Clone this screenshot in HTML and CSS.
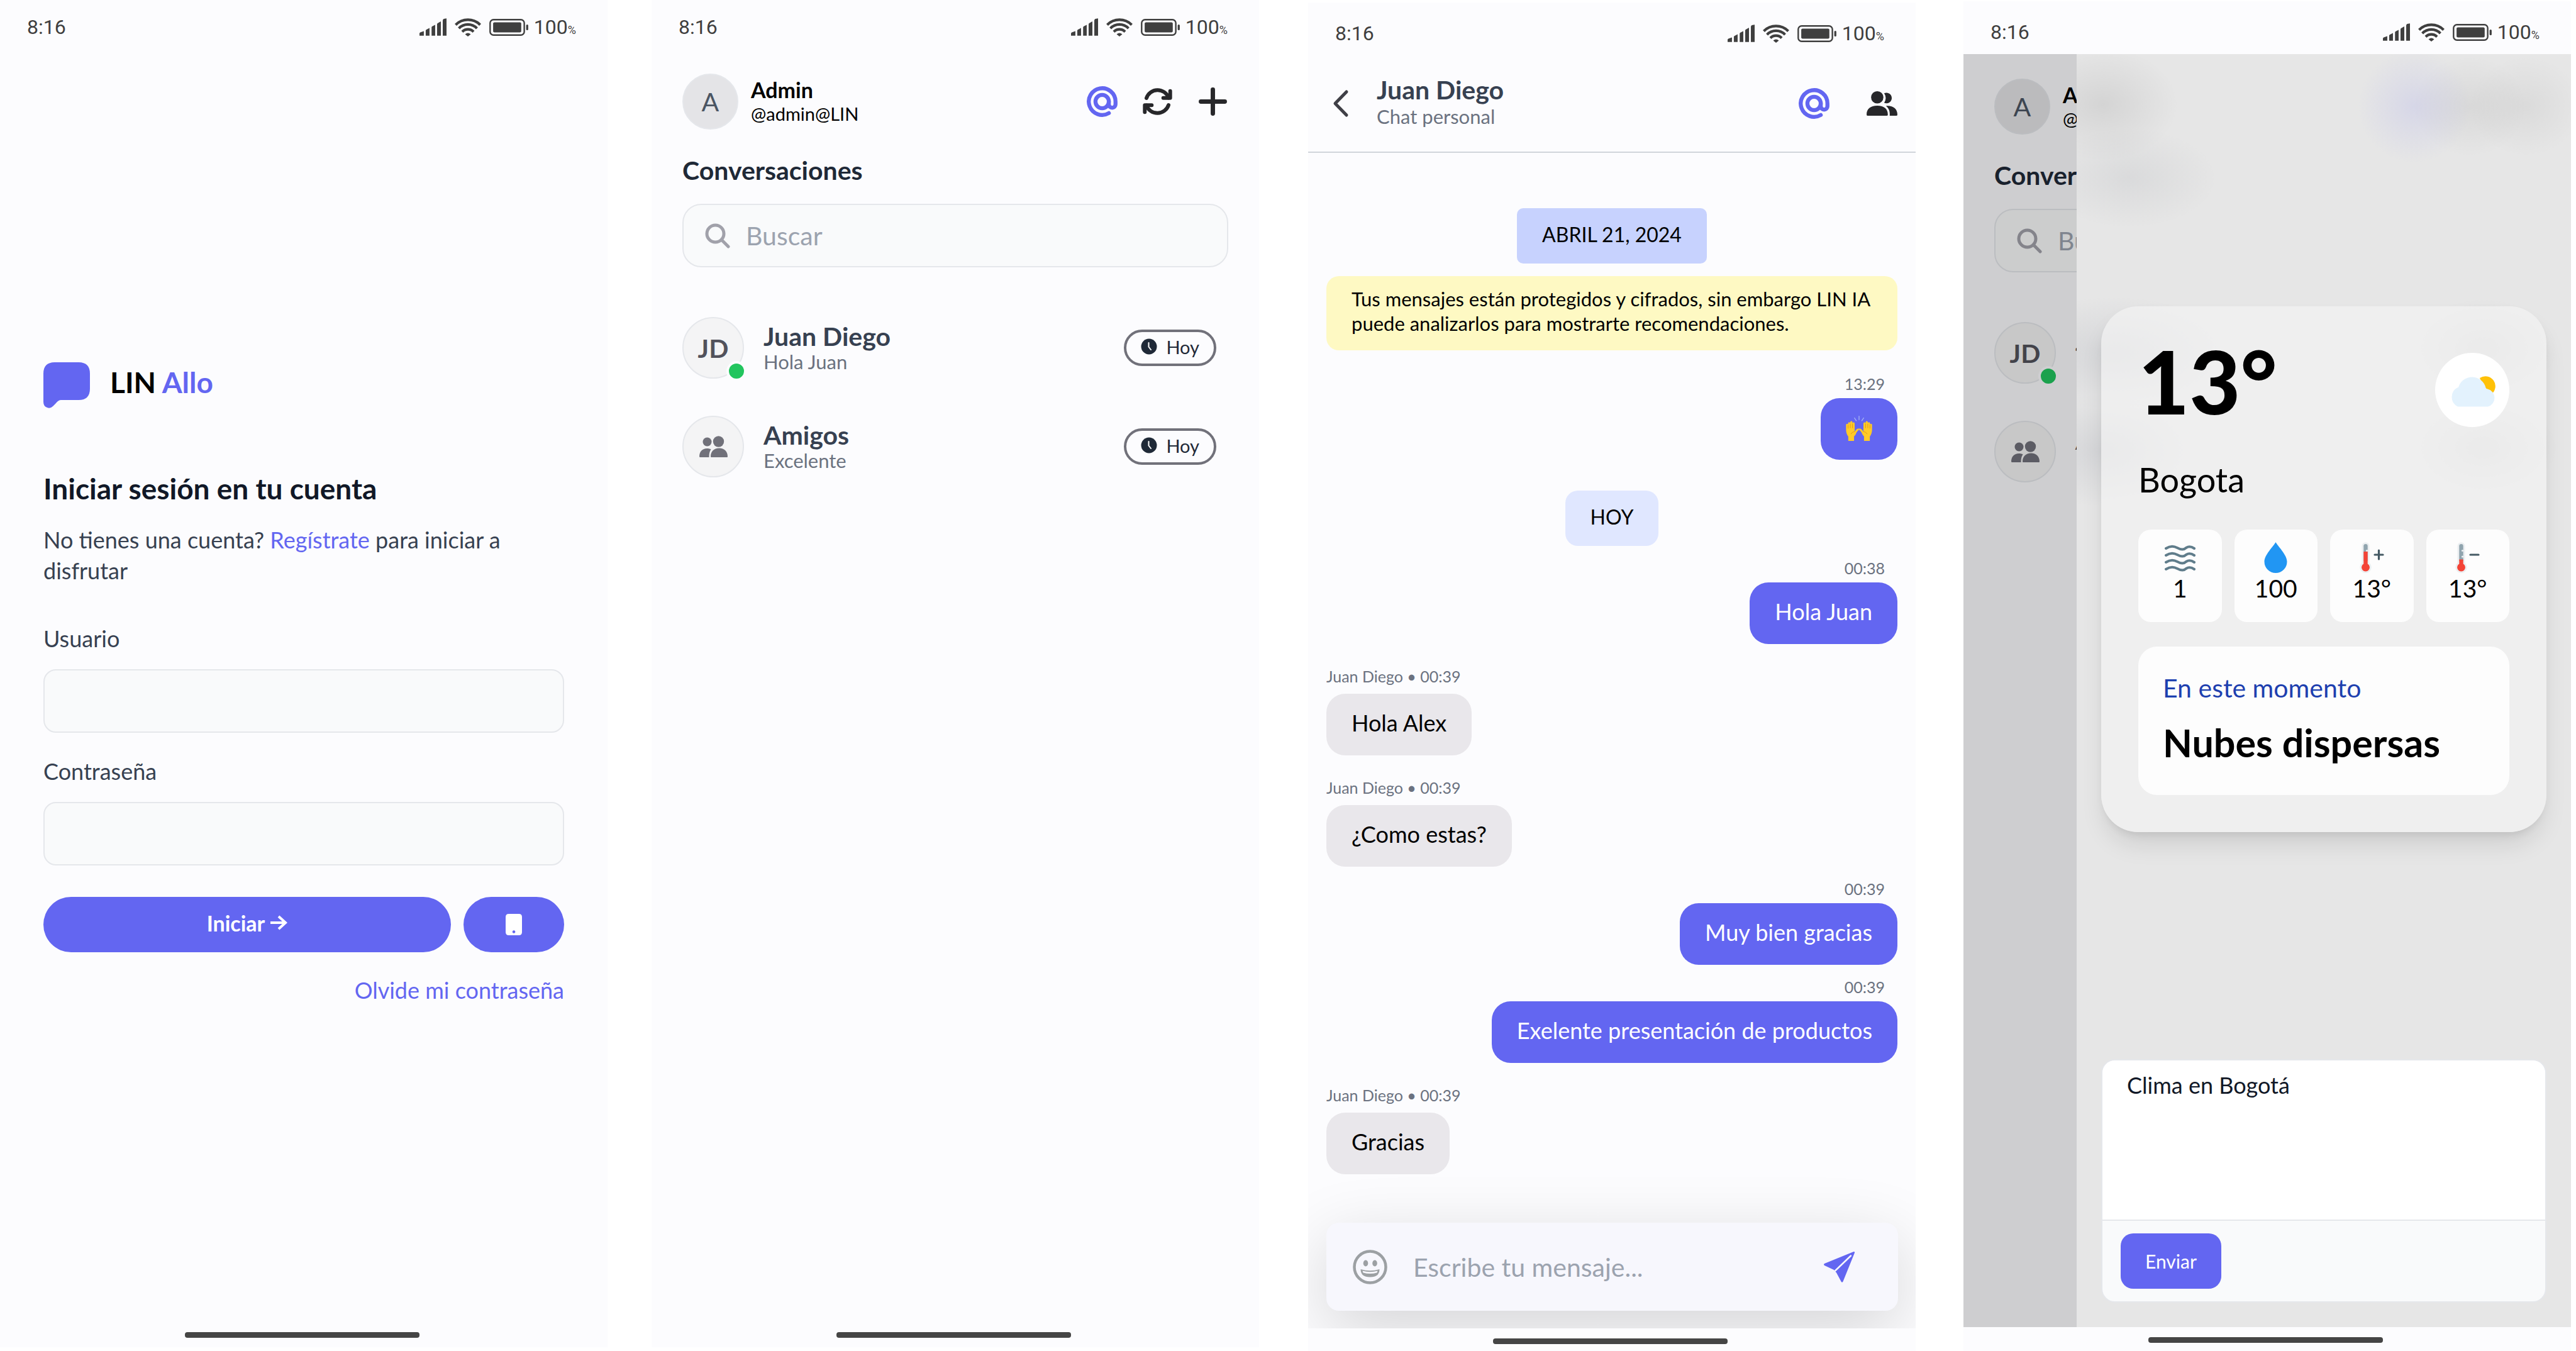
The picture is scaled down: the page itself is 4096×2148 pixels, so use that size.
FILE: index.html
```html
<!DOCTYPE html>
<html lang="es">
<head>
<meta charset="utf-8">
<meta name="viewport" content="width=device-width, initial-scale=1">
<title>LIN Allo</title>
<link rel="stylesheet" href="styles.css">
</head>
<body>
<svg class="sprite" aria-hidden="true">
  <symbol id="i-signal" viewBox="0 0 143 92"><path d="M0 92V80q0-4 4-6l19-6v24zM33 92V64q0-3 4-5l16-8v41zM64 92V47q0-3 4-5l15-8v58zM93 92V31q0-4 4-6l16-9v76zM123 92V12q0-6 5-9l15-3v92z"/></symbol>
  <symbol id="i-wifi" viewBox="0 0 140 100"><g fill="none" stroke="currentColor" stroke-width="14"><path d="M5 38a92 92 0 0 1 130 0"/><path d="M22 57a66 66 0 0 1 96 0"/><path d="M40 75a42 42 0 0 1 60 0"/></g><path d="M70 100 55 88q15-12 30 0z"/></symbol>
  <symbol id="i-battery" viewBox="0 0 206 90"><rect x="4" y="4" width="181" height="82" rx="18" fill="none" stroke="currentColor" stroke-width="8"/><rect x="20" y="18" width="149" height="54" rx="7"/><rect x="195" y="30" width="11" height="30" rx="5"/></symbol>
  <symbol id="i-at" viewBox="0 0 24 24"><g fill="none" stroke="currentColor" stroke-width="3.1" stroke-linecap="round"><circle cx="12" cy="12" r="5.2"/><path d="M17.2 21A10.4 10.4 0 1 1 22.4 12v2.2a2.6 2.6 0 0 1-5.2 0V12"/></g></symbol>
  <symbol id="i-sync" viewBox="0 0 24 24"><g fill="none" stroke="currentColor" stroke-width="2.9" stroke-linecap="round" stroke-linejoin="round"><path d="M3.400 9.300A9.100 9.100 0 0 1 20.600 9M20.600 14.700A9.100 9.100 0 0 1 3.400 15"/><path d="M21.900 3.800v5.400h-5.400M2.100 20.200v-5.400h5.400"/></g></symbol>
  <symbol id="i-plus" viewBox="0 0 24 24"><path d="M12 2.700v18.600M2.700 12h18.600" fill="none" stroke="currentColor" stroke-width="3.400" stroke-linecap="round"/></symbol>
  <symbol id="i-search" viewBox="0 0 40 40"><g fill="none" stroke="currentColor" stroke-width="5" stroke-linecap="round"><circle cx="16.500" cy="16.500" r="13.500"/><path d="M26.500 26.500 37 37"/></g></symbol>
  <symbol id="i-clock" viewBox="0 0 26 26"><circle cx="13" cy="13" r="12.500"/><path d="M12.500 7v6.500l3.500 4.500" fill="none" stroke="#fff" stroke-width="2" stroke-linecap="round"/></symbol>
  <symbol id="i-group" viewBox="0 0 45 35"><circle cx="12.500" cy="9.500" r="7"/><circle cx="30.500" cy="9" r="8.700"/><path d="M0 33c0-8 5-13 12-13 3 0 5 .5 6.500 1.500C16 25 15.500 29 15.500 34H1.500Q0 34 0 33zM18 33c0-8 5-13.500 13.500-13.500S45 25 45 33q0 1-1 1H19q-1 0-1-1z"/></symbol>
  <symbol id="i-people" viewBox="0 0 50 40"><circle cx="17.300" cy="10" r="10"/><path d="M28.500 3.500a8.600 8.600 0 1 1 0 15.500q5-8 0-15.500zM0 38c0-9 6-14.500 17.300-14.500S34.500 29 34.500 38q0 2-2 2H2q-2 0-2-2zM31.500 24C43 23 50 29 50 38q0 2-2 2H37.500c.5-7-1-12-6-16z"/></symbol>
  <symbol id="i-back" viewBox="0 0 49 49"><path d="M32 6 14 24.500 32 43" fill="none" stroke="currentColor" stroke-width="5" stroke-linecap="round" stroke-linejoin="round"/></symbol>
  <symbol id="i-arrow" viewBox="0 0 28 24"><path d="M1 12h24M14 2l11 10-11 10" fill="none" stroke="currentColor" stroke-width="4"/></symbol>
  <symbol id="i-phone" viewBox="0 0 26 34"><path fill-rule="evenodd" d="M5 0h16q5 0 5 5v24q0 5-5 5H5q-5 0-5-5V5q0-5 5-5zm8 26.200a2.300 2.300 0 1 0 .1 0z"/></symbol>
  <symbol id="i-logo" viewBox="0 0 74 73"><path d="M18 0h38q18 0 18 18v24q0 18-18 18H28q-4 0-8 5l-5 5q-4 4-9 2-6-2-6-9V18Q0 0 18 0z"/></symbol>
  <symbol id="i-smile" viewBox="0 0 55 55"><circle cx="27.500" cy="27.500" r="25" fill="none" stroke="currentColor" stroke-width="4.500"/><ellipse cx="20.500" cy="21.500" rx="3.800" ry="5"/><ellipse cx="35" cy="21.500" rx="3.800" ry="5"/><path d="M12.500 31q15 4.500 30 0 0 12.500-15 12.500T12.500 31z"/><path d="M15.500 33.500q12 3.500 24 0l-1 3q-11 3-22 0z" fill="#f7f7fd"/></symbol>
  <symbol id="i-send" viewBox="0 0 49 49"><path d="M47 .3q2.500-.8 1.900 1.700L30.500 47.500q-1.500 2.500-3 0L20 33.500l-4-4.500L1 22q-2-1.500 0-3z"/><path d="M18 30.500 43 6.500" stroke="#f7f7fd" stroke-width="2.500" stroke-linecap="round"/></symbol>
  <symbol id="i-hands" viewBox="0 0 132 126">
    <g stroke="#a9b7f2" stroke-width="4" stroke-linecap="round"><path d="M66 2v18M43 11l9 14M89 11 80 25"/></g>
    <g id="hand"><path d="M1 46q0-6 5-6t5 5V38q0-6 5.500-6t5.500 6V33q0-6 5.500-6t5.500 6v6q0-6 5.500-6t5.500 6V80q8-14 20-17l2 8q-9 4-16 20-4 9-9 12v23H12v-22Q1 90 1 70z" fill="#ffca28"/><path d="M11 46v18M22 40v22M33 40v22" stroke="#e0961c" stroke-width="3" fill="none"/><path d="M25 92q6-12 20-13" stroke="#e0961c" stroke-width="3" fill="none"/></g>
    <use href="#hand" transform="matrix(-1 0 0 1 132 0)"/>
  </symbol>
  <symbol id="i-cloud" viewBox="0 0 80 54"><path d="M52 8a14.500 14.500 0 1 1 18 26q-8-2-18-26z" fill="#ffc107"/><path d="M17 53.500A17 17 0 0 1 17 23q1.500 0 1.500-1.500a22.500 22.500 0 0 1 43 2q.7 2 3 2A14.500 14.500 0 0 1 65 53.500z" fill="#e3f2fd"/></symbol>
  <symbol id="i-waves" viewBox="0 0 49 49"><g fill="none" stroke="#607d8b" stroke-width="4" stroke-linecap="round"><path d="M2 10q9-6 18-1t14 0q6-4 13 1M2 21q9-6 18-1t14 0q6-4 13 1M2 32q9-6 18-1t14 0q6-4 13 1M2 43q9-6 18-1t14 0q6-4 13 1"/></g></symbol>
  <symbol id="i-drop" viewBox="0 0 49 49"><path d="M24.500 0c3 6 18 20 18 31a18 18 0 0 1-36 0c0-11 15-25 18-31z" fill="#2196f3"/></symbol>
  <symbol id="i-thermo" viewBox="0 0 49 49"><path d="M8.500 6.200a6 6 0 0 1 12 0V33a9.200 9.200 0 1 1-12 0z" fill="#eceff1"/><path d="M11.300 6.200a3.200 3.200 0 0 1 6.400 0V30h-6.400z" fill="#90a4ae"/></symbol>
  <symbol id="i-hot" viewBox="0 0 49 49"><use href="#i-thermo"/><circle cx="16.500" cy="13.500" r="1.600" fill="#eceff1"/><path d="M11.300 15h6.400v19.500a6.400 6.400 0 1 1-6.400 0z" fill="#f44336"/><path d="M29 20h13M35.500 13v14" stroke="#455a64" stroke-width="3.200" stroke-linecap="round"/></symbol>
  <symbol id="i-cold" viewBox="0 0 49 49"><use href="#i-thermo"/><g fill="#eceff1"><circle cx="16.500" cy="13.500" r="1.600"/><circle cx="16.500" cy="23" r="1.600"/></g><path d="M11.300 27.500h6.400v7a6.400 6.400 0 1 1-6.400 0z" fill="#f44336"/><path d="M29 20h13" stroke="#455a64" stroke-width="3.200" stroke-linecap="round"/></symbol>
</svg>

<main class="showcase">

  <section class="screen screen-short" aria-label="Inicio de sesión">
    <div class="status"><span class="clock">8:16</span>
      <svg class="s-signal"><use href="#i-signal"/></svg><svg class="s-wifi"><use href="#i-wifi"/></svg><svg class="s-battery"><use href="#i-battery"/></svg>
      <span class="level">100<small>%</small></span></div>
    <div class="view login">
      <div class="brand"><svg class="logo"><use href="#i-logo"/></svg><span>LIN <em>Allo</em></span></div>
      <h1>Iniciar sesión en tu cuenta</h1>
      <p class="intro">No tienes una cuenta? <a href="#registro">Regístrate</a> para iniciar a<br>disfrutar</p>
      <form class="login-form">
        <label for="user">Usuario</label>
        <input id="user" type="text">
        <label for="pass">Contraseña</label>
        <input id="pass" type="password">
        <div class="actions">
          <button class="pill wide" type="button">Iniciar <svg class="arrow"><use href="#i-arrow"/></svg></button>
          <button class="pill" type="button" aria-label="Usar el teléfono"><svg class="phone"><use href="#i-phone"/></svg></button>
        </div>
        <a class="forgot" href="#olvide">Olvide mi contraseña</a>
      </form>
    </div>
    <div class="home"><i></i></div>
  </section>

  <section class="screen screen-short" aria-label="Conversaciones">
    <div class="status"><span class="clock">8:16</span>
      <svg class="s-signal"><use href="#i-signal"/></svg><svg class="s-wifi"><use href="#i-wifi"/></svg><svg class="s-battery"><use href="#i-battery"/></svg>
      <span class="level">100<small>%</small></span></div>
    <div class="view inbox">
      <header class="profile">
        <span class="avatar avatar-me">A</span>
        <div class="who"><strong>Admin</strong><span>@admin@LIN</span></div>
        <button class="icon-btn accent" type="button" aria-label="Asistente"><svg><use href="#i-at"/></svg></button>
        <button class="icon-btn" type="button" aria-label="Actualizar"><svg><use href="#i-sync"/></svg></button>
        <button class="icon-btn" type="button" aria-label="Nueva"><svg><use href="#i-plus"/></svg></button>
      </header>
      <h2>Conversaciones</h2>
      <div class="search"><svg><use href="#i-search"/></svg><input type="text" placeholder="Buscar" aria-label="Buscar"></div>
      <ul class="chats">
        <li><span class="avatar online">JD</span><div class="peer"><strong>Juan Diego</strong><span>Hola Juan</span></div><span class="badge"><svg><use href="#i-clock"/></svg>Hoy</span></li>
        <li><span class="avatar"><svg><use href="#i-group"/></svg></span><div class="peer"><strong>Amigos</strong><span>Excelente</span></div><span class="badge"><svg><use href="#i-clock"/></svg>Hoy</span></li>
      </ul>
    </div>
    <div class="home"><i></i></div>
  </section>

  <section class="screen screen-chat" aria-label="Chat">
    <div class="status"><span class="clock">8:16</span>
      <svg class="s-signal"><use href="#i-signal"/></svg><svg class="s-wifi"><use href="#i-wifi"/></svg><svg class="s-battery"><use href="#i-battery"/></svg>
      <span class="level">100<small>%</small></span></div>
    <div class="view chat">
      <header class="chat-head">
        <button class="icon-btn back" type="button" aria-label="Volver"><svg><use href="#i-back"/></svg></button>
        <div class="title"><strong>Juan Diego</strong><span>Chat personal</span></div>
        <button class="icon-btn accent" type="button" aria-label="Asistente"><svg><use href="#i-at"/></svg></button>
        <button class="icon-btn" type="button" aria-label="Integrantes"><svg><use href="#i-people"/></svg></button>
      </header>
      <div class="log">
        <span class="day day-first">ABRIL 21, 2024</span>
        <p class="notice">Tus mensajes están protegidos y cifrados, sin embargo LIN IA<br>puede analizarlos para mostrarte recomendaciones.</p>
        <div class="msg sent"><time>13:29</time><p><svg class="hands" role="img" aria-label="Manos en alto"><use href="#i-hands"/></svg></p></div>
        <span class="day">HOY</span>
        <div class="msg sent"><time>00:38</time><p>Hola Juan</p></div>
        <div class="msg got"><time>Juan Diego • 00:39</time><p>Hola Alex</p></div>
        <div class="msg got"><time>Juan Diego • 00:39</time><p>¿Como estas?</p></div>
        <div class="msg sent"><time>00:39</time><p>Muy bien gracias</p></div>
        <div class="msg sent"><time>00:39</time><p>Exelente presentación de productos</p></div>
        <div class="msg got"><time>Juan Diego • 00:39</time><p>Gracias</p></div>
      </div>
      <form class="composer">
        <button type="button" class="smile" aria-label="Emojis"><svg><use href="#i-smile"/></svg></button>
        <input type="text" placeholder="Escribe tu mensaje..." aria-label="Mensaje">
        <button type="button" class="icon-btn accent" aria-label="Enviar mensaje"><svg><use href="#i-send"/></svg></button>
      </form>
    </div>
    <div class="home"><i></i></div>
  </section>

  <section class="screen screen-assistant" aria-label="Asistente">
    <div class="status"><span class="clock">8:16</span>
      <svg class="s-signal"><use href="#i-signal"/></svg><svg class="s-wifi"><use href="#i-wifi"/></svg><svg class="s-battery"><use href="#i-battery"/></svg>
      <span class="level">100<small>%</small></span></div>
    <div class="view assistant">
      <div class="behind" inert>
        <div class="inbox">
          <header class="profile">
            <span class="avatar avatar-me">A</span>
            <div class="who"><strong>Admin</strong><span>@admin@LIN</span></div>
          </header>
          <h2>Conversaciones</h2>
          <div class="search"><svg><use href="#i-search"/></svg><input type="text" placeholder="Buscar" aria-label="Buscar"></div>
          <ul class="chats">
            <li><span class="avatar online">JD</span><div class="peer"><strong>Juan Diego</strong><span>Hola Juan</span></div></li>
            <li><span class="avatar"><svg><use href="#i-group"/></svg></span><div class="peer"><strong>Amigos</strong><span>Excelente</span></div></li>
          </ul>
        </div>
        <div class="scrim"></div>
      </div>
      <aside class="drawer">
        <div class="result">
          <article class="weather">
            <div class="now"><span class="temp">13°</span><span class="sky"><svg><use href="#i-cloud"/></svg></span></div>
            <p class="city">Bogota</p>
            <div class="stats">
              <div><svg><use href="#i-waves"/></svg>1</div>
              <div><svg><use href="#i-drop"/></svg>100</div>
              <div><svg><use href="#i-hot"/></svg>13°</div>
              <div><svg><use href="#i-cold"/></svg>13°</div>
            </div>
            <div class="summary"><span>En este momento</span><strong>Nubes dispersas</strong></div>
          </article>
        </div>
        <form class="prompt">
          <textarea aria-label="Pregunta">Clima en Bogotá</textarea>
          <div class="prompt-foot"><button type="button">Enviar</button></div>
        </form>
      </aside>
    </div>
    <div class="home"><i></i></div>
  </section>

</main>
</body>
</html>
```
FILE: styles.css
```css
*, ::before, ::after { box-sizing: border-box; }

body {
  margin: 0;
  background: #fff;
  color: #000;
  font-family: Lato, "Open Sans", sans-serif;
  font-size: 36px;
  line-height: 49px;
}

h1, h2, p, ul { margin: 0; padding: 0; list-style: none; }
a { color: #6366f1; text-decoration: none; }
button, input, textarea { font: inherit; color: inherit; border: 0; margin: 0; padding: 0; background: none; outline: 0; }
svg { display: block; fill: currentColor; flex: none; }
.sprite { position: absolute; width: 0; height: 0; }

.showcase { display: flex; min-height: 100vh; padding-right: 8px; }

.screen {
  flex: 1 1 0;
  min-width: 0;
  display: flex;
  flex-direction: column;
  background: #fcfcfe;
  margin-left: 76px;
}
.screen-short { margin-left: 70px; margin-bottom: 6px; }
.screen-short:first-child { margin-left: 0; }
.screen-chat { margin-left: 78px; margin-top: 4px; }
.screen-assistant { margin-top: 2px; }

/* status bar */
.status {
  flex: none;
  height: 84px;
  padding: 14px 50px 0 43px;
  display: flex;
  align-items: center;
  gap: 13px;
  color: #3f3f3f;
  font-family: Roboto, sans-serif;
  font-size: 32px;
  line-height: 28px;
}
.screen-short .status { height: 78px; padding-top: 8px; }
.clock { margin-right: auto; }
.s-signal { width: 43px; height: 28px; }
.s-wifi { width: 42px; height: 30px; }
.s-battery { width: 62px; height: 27px; }
.level { margin-left: -4px; }
.level small { font-size: 18px; line-height: 18px; }

/* gesture bar */
.home { flex: none; height: 36px; padding: 16px 6px 0 0; }
.screen-short .home { height: 40px; }
.screen-assistant .home { height: 38px; }
.home i { display: block; width: 373px; height: 9px; margin: 0 auto; border-radius: 4px; background: #454545; }

.view { flex: 1; display: flex; flex-direction: column; min-height: 0; }

/* login */
.login { justify-content: center; padding: 0 69px 5px; color: #374151; }
.brand { display: flex; align-items: flex-start; gap: 32px; color: #000; font-size: 46px; font-weight: 700; line-height: 64px; }
.brand em { font-style: normal; color: #6366f1; }
.logo { width: 74px; height: 73px; color: #6366f1; }
.login h1 { margin-top: 101px; color: #111827; font-size: 46px; line-height: 54px; }
.intro { margin-top: 30px; }
.login-form { display: flex; flex-direction: column; margin-top: 59px; }
.login-form input {
  height: 101px;
  margin: 24px 0 37px;
  padding: 0 30px;
  border: 2px solid #e5e7eb;
  border-radius: 20px;
  background: #f9fafb;
}
.actions { display: flex; gap: 20px; margin-top: 13px; }
.pill {
  display: flex;
  align-items: center;
  justify-content: center;
  gap: 8px;
  width: 160px;
  height: 88px;
  border-radius: 44px;
  background: #6366f1;
  color: #fff;
  font-size: 34px;
  font-weight: 700;
}
.pill.wide { flex: 1; padding-bottom: 6px; }
.arrow { width: 28px; height: 24px; }
.phone { width: 26px; height: 34px; }
.forgot { align-self: flex-end; margin-top: 36px; }

/* conversation list */
.inbox { padding: 39px 49px; }
.profile { display: flex; align-items: center; gap: 39px; height: 89px; }
.avatar {
  position: relative;
  flex: none;
  display: flex;
  align-items: center;
  justify-content: center;
  width: 98px;
  height: 98px;
  border: 2px solid #e5e7eb;
  border-radius: 50%;
  background: #f4f4f5;
  color: #52525b;
  font-size: 41px;
  font-weight: 700;
}
.avatar svg { width: 45px; height: 35px; color: #71717a; }
.avatar-me { width: 89px; height: 89px; background: #e4e4e7; color: #4b5563; font-weight: 400; margin-right: -19px; }
.online::after {
  content: "";
  position: absolute;
  right: -6px;
  bottom: -6px;
  width: 32px;
  height: 32px;
  border: 4px solid #fcfcfe;
  border-radius: 50%;
  background: #22c55e;
}
.who, .peer, .title { flex: 1; display: flex; flex-direction: column; }
.who strong { font-size: 34px; line-height: 38px; }
.who span { font-size: 29px; line-height: 38px; }
.icon-btn { flex: none; width: 49px; height: 49px; color: #27272a; }
.icon-btn svg { width: 100%; height: 100%; }
.accent { color: #6366f1; }
.inbox h2 { margin-top: 35px; color: #1f2937; font-size: 41px; line-height: 59px; }
.search {
  display: flex;
  align-items: center;
  gap: 25px;
  height: 101px;
  margin-top: 24px;
  padding: 0 34px;
  border: 2px solid #e5e7eb;
  border-radius: 30px;
  background: #f9fafb;
}
.search svg { width: 40px; height: 40px; color: #a1a1aa; }
.search input, .composer input { flex: 1; min-width: 0; font-size: 41px; }
::placeholder { color: #9ca3af; opacity: 1; }
.chats { display: flex; flex-direction: column; gap: 59px; margin-top: 79px; }
.chats li { display: flex; align-items: center; gap: 31px; padding-right: 19px; }
.peer strong { color: #374151; font-size: 41px; line-height: 44px; }
.peer span { color: #6b7280; font-size: 31px; line-height: 36px; }
.badge {
  display: flex;
  align-items: center;
  gap: 14px;
  height: 58px;
  padding: 0 23px 4px;
  border: 4px solid #71717a;
  border-radius: 29px;
  color: #1f2937;
  font-size: 29px;
}
.badge svg { width: 26px; height: 26px; }

/* chat */
.chat { overflow: hidden; }
.chat-head { display: flex; align-items: center; height: 155px; padding: 0 29px; border-bottom: 2px solid #d1d5db; }
.back { margin-right: 31px; color: #3f3f46; }
.title strong { color: #374151; font-size: 41px; line-height: 41px; }
.title span { color: #6b7280; font-size: 31px; line-height: 44px; }
.chat-head .accent { margin-right: 59px; }
.log { flex: 1; display: flex; flex-direction: column; padding: 88px 29px 0; }
.day {
  align-self: center;
  margin-top: 49px;
  padding: 17px 40px 22px;
  border-radius: 20px;
  background: #e0e7ff;
  font-size: 32px;
}
.day-first { margin-top: 0; border-radius: 10px; background: #c7d2fe; }
.notice {
  margin: 20px 0 18px;
  padding: 17px 0 23px 40px;
  border-radius: 20px;
  background: #fef9c3;
  font-size: 31px;
  line-height: 39px;
}
.msg { display: flex; flex-direction: column; }
.msg time { color: #6b7280; font-size: 25px; line-height: 39px; }
.msg p { height: 98px; padding: 22px 40px 27px; border-radius: 30px; }
.sent { align-items: flex-end; gap: 3px; margin-top: 16px; }
.sent time { margin-right: 20px; }
.sent p { background: #6366f1; color: #fff; }
.got { align-items: flex-start; gap: 8px; margin-top: 32px; }
.got p { background: #e9e7eb; }
.hands { width: 42px; height: 40px; margin-top: 6px; }
.composer {
  flex: none;
  display: flex;
  align-items: center;
  height: 140px;
  margin: 0 28px 28px 29px;
  padding: 0 69px 0 42px;
  border-radius: 20px;
  background: #f7f7fd;
  box-shadow: 0 30px 108px rgba(0, 0, 0, 0.16);
}
.smile { width: 55px; height: 55px; margin-right: 41px; color: #9ca0a3; }
.smile svg { width: 55px; height: 55px; }

/* assistant: a strip of the conversation list, dimmed, beside the drawer */
.assistant { flex-direction: row; }
.behind { position: relative; flex: none; width: 180px; overflow: hidden; }
.behind .inbox { width: 900px; }
.scrim { position: absolute; inset: 0; background: rgba(0, 0, 0, 0.18); }
.drawer {
  flex: 1;
  display: flex;
  flex-direction: column;
  padding: 39px;
  background:
    radial-gradient(120px 90px at 42px 80px, rgba(0, 0, 0, 0.08), transparent),
    radial-gradient(140px 80px at 84px 197px, rgba(20, 30, 50, 0.06), transparent),
    radial-gradient(90px 90px at 537px 83px, rgba(99, 102, 241, 0.12), transparent),
    radial-gradient(90px 80px at 625px 83px, rgba(0, 0, 0, 0.06), transparent),
    radial-gradient(90px 80px at 714px 83px, rgba(0, 0, 0, 0.05), transparent),
    radial-gradient(190px 90px at 60px 475px, rgba(20, 30, 60, 0.08), transparent),
    radial-gradient(150px 90px at 40px 630px, rgba(20, 30, 60, 0.08), transparent),
    radial-gradient(120px 80px at 646px 468px, rgba(0, 0, 0, 0.06), transparent),
    radial-gradient(120px 80px at 646px 626px, rgba(0, 0, 0, 0.06), transparent),
    #e6e6e6;
}
.result { flex: 1; display: flex; flex-direction: column; justify-content: center; }
.weather {
  padding: 59px;
  border-radius: 59px;
  background: rgba(244, 244, 244, 0.65);
  box-shadow: 0 24px 40px -8px rgba(0, 0, 0, 0.12), 0 8px 16px -8px rgba(0, 0, 0, 0.12);
}
.now { display: flex; align-items: center; justify-content: space-between; }
.temp { padding-bottom: 30px; font-size: 140px; font-weight: 900; line-height: 118px; }
.sky { display: flex; align-items: center; justify-content: center; width: 118px; height: 118px; border-radius: 50%; background: #fff; }
.sky svg { width: 80px; height: 54px; }
.city { margin-top: 39px; font-size: 54px; line-height: 59px; }
.stats { display: grid; grid-template-columns: repeat(4, 1fr); gap: 20px; margin-top: 50px; }
.stats div {
  display: flex;
  flex-direction: column;
  align-items: center;
  padding: 20px 0 29px;
  border-radius: 20px;
  background: #fdfdfd;
  font-size: 39px;
}
.stats svg { width: 49px; height: 49px; }
.summary {
  display: flex;
  flex-direction: column;
  gap: 20px;
  margin-top: 39px;
  padding: 41px 39px;
  border-radius: 30px;
  background: #fdfdfd;
}
.summary span { color: #1e40af; font-size: 41px; }
.summary strong { font-size: 61px; line-height: 85px; }
.prompt { flex: none; display: flex; flex-direction: column; border: 2px solid #e5e7eb; border-radius: 22px; background: #f9fafb; overflow: hidden; }
.prompt textarea { display: block; width: 100%; height: 253px; padding: 15px 39px; background: #fff; color: #111827; resize: none; }
.prompt-foot { padding: 20px 29px; border-top: 2px solid #e5e7eb; }
.prompt button { height: 88px; padding: 0 39px; border-radius: 20px; background: #6366f1; color: #fff; font-size: 30px; line-height: 85px; }
```
